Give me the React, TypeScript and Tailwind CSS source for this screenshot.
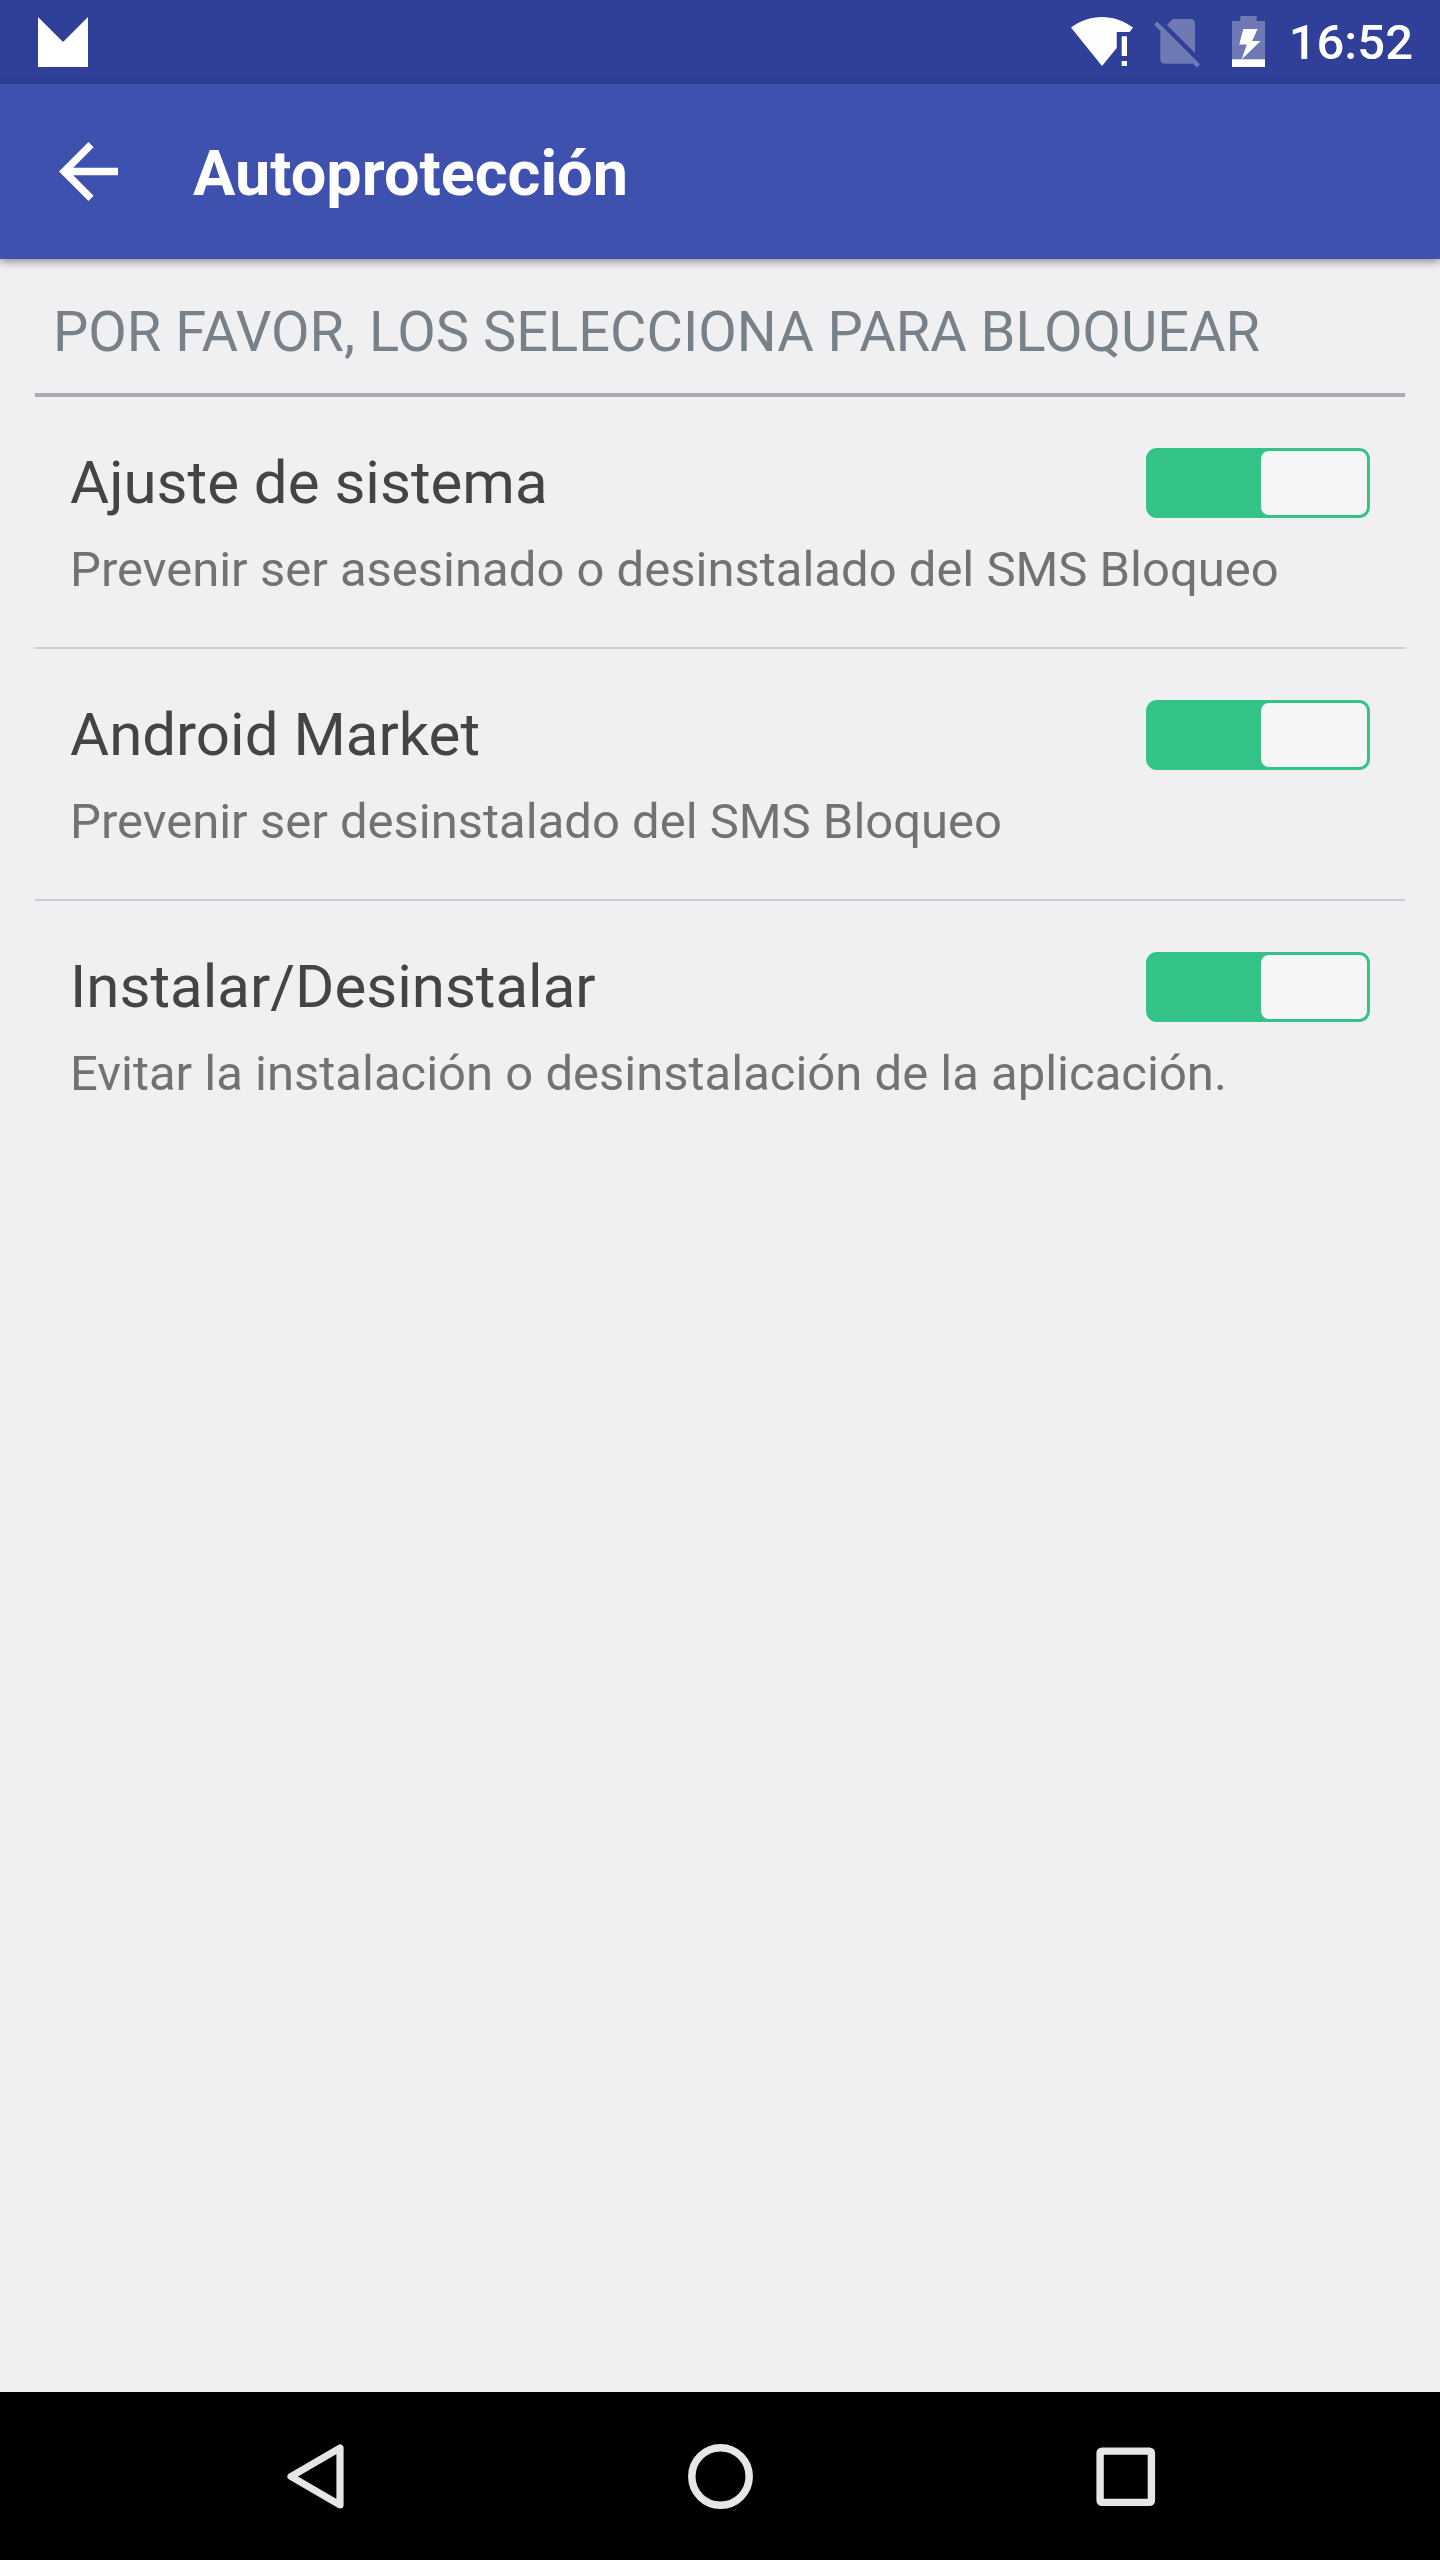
import { useState } from 'react';

const settings = [
  {
    id: 'system',
    title: 'Ajuste de sistema',
    summary: 'Prevenir ser asesinado o desinstalado del SMS Bloqueo',
  },
  {
    id: 'market',
    title: 'Android Market',
    summary: 'Prevenir ser desinstalado del SMS Bloqueo',
  },
  {
    id: 'install',
    title: 'Instalar/Desinstalar',
    summary: 'Evitar la instalación o desinstalación de la aplicación.',
  },
];

function StatusBar() {
  return (
    <div className="h-[84px] bg-[#303f97] flex items-start text-white">
      <svg className="ml-[38px] mt-[17px]" width="50" height="50" viewBox="0 0 50 50" fill="currentColor">
        <path d="M0 0L25 25L50 0V50H0Z" />
      </svg>

      {/* Wi-Fi without connectivity */}
      <svg className="ml-auto mt-[17px]" width="62" height="49" viewBox="0 0 62 49" fill="currentColor">
        <path d="M31 0C42 0 53 4 62 10.5L58.6 15H45.7V31L31 49L0 10.5C9 4 20 0 31 0Z" />
        <path d="M50.7 19.3H56V39H50.7ZM50.7 44H56V49H50.7Z" />
      </svg>

      {/* No SIM */}
      <svg className="ml-[21px] mt-[19px]" width="46" height="49" viewBox="0 0 46 49" fill="currentColor" opacity="0.3">
        <path d="M18.7 0H36.5Q41 0 41 4.5V34L13 6Z" />
        <path d="M3.2 2.4L46 45.2L42.8 48.4L38.5 44.2Q37.6 44.7 36.5 44.7H11Q6.3 44.7 6.3 40V12L0 5.6Z" />
      </svg>

      {/* Charging battery */}
      <svg className="ml-[32px] mt-[16px]" width="33" height="51" viewBox="0 0 33 51" fill="currentColor">
        <path d="M8.3 0H24.7V5H33V43.3H0V5H8.3Z" opacity="0.3" />
        <path d="M0 43.3H33V51H0ZM11.3 13H25.5L20.2 25H28.5L9.6 43.5L14.8 28.5H7.2Z" />
      </svg>

      <span className="ml-[24px] mr-[27px] mt-[14px] text-[49px] leading-[58px] font-medium">16:52</span>
    </div>
  );
}

function AppBar() {
  return (
    <header className="relative z-10 h-[175px] bg-[#3f51af] text-white flex items-center shadow-[0_3px_8px_rgba(0,0,0,0.4)]">
      <button className="ml-[59px]" aria-label="Atrás">
        <svg width="59" height="59" viewBox="0 0 59 59" fill="currentColor">
          <path d="M59 25.8V33.2H14.2L34.6 53.8L29.5 59L0 29.5L29.5 0L34.6 5.2L14.2 25.8Z" />
        </svg>
      </button>
      <h1 className="ml-[75px] mt-[5px] text-[63px] leading-[74px] font-bold">Autoprotección</h1>
    </header>
  );
}

function Toggle({ checked, onChange }: { checked: boolean; onChange: () => void }) {
  return (
    <button
      role="switch"
      aria-checked={checked}
      onClick={onChange}
      className={`w-[224px] h-[70px] p-[3px] rounded-[11px] flex shrink-0 ${
        checked ? 'bg-[#33c386] justify-end' : 'bg-[#c4c4c4] justify-start'
      }`}
    >
      <span className="w-[106px] h-[64px] rounded-[8px] bg-[#f6f6f6]" />
    </button>
  );
}

function NavBar() {
  return (
    <nav className="h-[168px] bg-black flex items-start" fill="none">
      <svg className="ml-[287px] mt-[52px]" width="57" height="65" viewBox="0 0 57 65" fill="none" stroke="#e6e6e6">
        <path d="M53 4V61L4 32.5Z" strokeWidth="7.2" strokeLinejoin="round" />
      </svg>
      <svg className="ml-[344px] mt-[52px]" width="65" height="65" viewBox="0 0 65 65" fill="none" stroke="#e6e6e6">
        <circle cx="32.5" cy="32.5" r="28.7" strokeWidth="7.5" />
      </svg>
      <svg className="ml-[343px] mt-[55px]" width="60" height="60" viewBox="0 0 60 60" fill="none" stroke="#e6e6e6">
        <rect x="4.1" y="4.1" width="51.3" height="51.3" rx="1.8" strokeWidth="7.4" />
      </svg>
    </nav>
  );
}

export default function App() {
  const [enabled, setEnabled] = useState<Record<string, boolean>>({ system: true, market: true, install: true });

  const toggle = (id: string) => setEnabled((e) => ({ ...e, [id]: !e[id] }));

  return (
    <div className="w-[1440px] h-[2560px] flex flex-col overflow-hidden bg-[#f0f0f2] font-['Roboto',sans-serif]">
      <StatusBar />
      <AppBar />

      <main className="flex-1 px-[35px]">
        <h2 className="h-[138px] pt-[40px] pl-[18px] border-b-4 border-[#a8abb0] text-[56px] leading-[66px] text-[#788089] whitespace-nowrap">
          POR FAVOR, LOS SELECCIONA PARA BLOQUEAR
        </h2>
        <ul>
          {settings.map((s) => (
            <li key={s.id} className="h-[252px] px-[35px] border-b-2 border-[#c9ced4] last:border-b-0">
              <div className="flex items-start justify-between pt-[51px]">
                <h3 className="text-[60px] leading-[70px] text-[#444444]">{s.title}</h3>
                <Toggle checked={enabled[s.id]} onChange={() => toggle(s.id)} />
              </div>
              <p className="mt-[23px] text-[49px] leading-[58px] text-[#727272] whitespace-nowrap">{s.summary}</p>
            </li>
          ))}
        </ul>
      </main>

      <NavBar />
    </div>
  );
}
